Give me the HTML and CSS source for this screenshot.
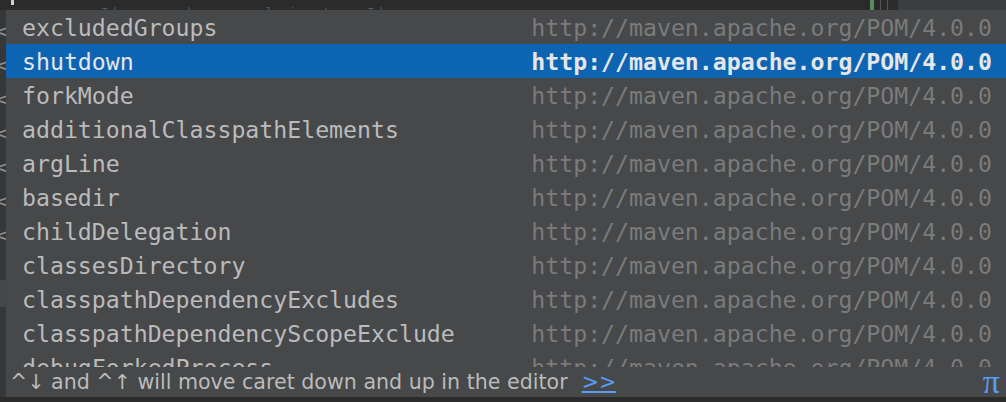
FILE: index.html
```html
<!DOCTYPE html>
<html>
<head>
<meta charset="utf-8">
<link rel="stylesheet" href="styles.css">
</head>
<body>
<div class="screen">
  <div class="topbar">
    <span class="caret-mark"></span>
    <span class="ghost">&lt;groupId&gt;org.apache.maven.plugins&lt;/groupId&gt;</span>
    <span class="spacer"></span>
    <span class="gutter-green"></span>
    <span class="gutter-line"></span>
    <span class="gutter-line"></span>
    <span class="right-panel"></span>
  </div>
  <div class="main">
    <div class="gutter">
      <span>&lt;</span><span>&lt;</span><span>&lt;</span><span>&lt;</span><span>&lt;</span><span>&lt;</span><span>&lt;</span>
      <div class="gutter-band"></div>
    </div>
    <div class="popup">
      <ul class="list">
        <li class="row"><span class="name">excludedGroups</span><span class="ns">http://maven.apache.org/POM/4.0.0</span></li>
        <li class="row selected"><span class="name">shutdown</span><span class="ns">http://maven.apache.org/POM/4.0.0</span></li>
        <li class="row"><span class="name">forkMode</span><span class="ns">http://maven.apache.org/POM/4.0.0</span></li>
        <li class="row"><span class="name">additionalClasspathElements</span><span class="ns">http://maven.apache.org/POM/4.0.0</span></li>
        <li class="row"><span class="name">argLine</span><span class="ns">http://maven.apache.org/POM/4.0.0</span></li>
        <li class="row"><span class="name">basedir</span><span class="ns">http://maven.apache.org/POM/4.0.0</span></li>
        <li class="row"><span class="name">childDelegation</span><span class="ns">http://maven.apache.org/POM/4.0.0</span></li>
        <li class="row"><span class="name">classesDirectory</span><span class="ns">http://maven.apache.org/POM/4.0.0</span></li>
        <li class="row"><span class="name">classpathDependencyExcludes</span><span class="ns">http://maven.apache.org/POM/4.0.0</span></li>
        <li class="row"><span class="name">classpathDependencyScopeExclude</span><span class="ns">http://maven.apache.org/POM/4.0.0</span></li>
        <li class="row"><span class="name">debugForkedProcess</span><span class="ns">http://maven.apache.org/POM/4.0.0</span></li>
      </ul>
      <div class="footer">
        <span class="hint">^↓ and ^↑ will move caret down and up in the editor</span>
        <a class="more" href="#">&gt;&gt;</a>
        <span class="pi">π</span>
      </div>
    </div>
  </div>
</div>
</body>
</html>
```
FILE: styles.css
```css
* { box-sizing: border-box; }
html, body {
  margin: 0;
  padding: 0;
  background: #2b2b2b;
  width: 1006px;
  height: 402px;
  overflow: hidden;
}
.screen {
  width: 1006px;
  height: 402px;
  display: flex;
  flex-direction: column;
}
.topbar {
  height: 10px;
  flex: none;
  display: flex;
  align-items: stretch;
  background: #2b2b2b;
  overflow: hidden;
}
.caret-mark {
  width: 3px;
  height: 5px;
  background: #d0d0d0;
  margin-left: 11px;
}
.ghost {
  margin-left: 40px;
  margin-top: 6px;
  font-family: "DejaVu Sans Mono", monospace;
  font-size: 13px;
  line-height: 13px;
  color: #55585a;
  white-space: nowrap;
}
.spacer { flex: 1; }
.gutter-green {
  width: 4px;
  background: #5a8a5e;
  margin-right: 6px;
}
.gutter-line {
  width: 1px;
  background: #555758;
  margin-right: 6px;
}
.right-panel {
  width: 108px;
  background: #3c3f41;
  margin-left: 4px;
}
.main {
  height: 387px;
  flex: none;
  display: flex;
}
.gutter {
  width: 6px;
  flex: none;
  background: #353739;
  display: flex;
  flex-direction: column;
  overflow: hidden;
  font-family: "DejaVu Sans", sans-serif;
  font-size: 20px;
  color: #8c8c8c;
  padding-top: 4px;
}
.gutter span {
  height: 34px;
  line-height: 34px;
  margin-left: -6px;
  flex: none;
}
.gutter-band {
  margin-top: 28px;
  height: 27px;
  background: #45484a;
  flex: none;
}
.popup {
  flex: 1;
  background: #46484a;
  display: flex;
  flex-direction: column;
  overflow: hidden;
}
.list {
  list-style: none;
  margin: 0;
  padding: 0;
  height: 357px;
  overflow: hidden;
  flex: none;
}
.row {
  height: 34px;
  display: flex;
  align-items: center;
  justify-content: space-between;
  padding: 0 14px 0 16px;
  font-family: "DejaVu Sans Mono", monospace;
  font-size: 23.2px;
  white-space: nowrap;
}
.name { color: #bbbbbb; }
.ns { color: #7b7b7b; }
.row.selected { background: #0d64b2; }
.row.selected .name { color: #e6e6e6; }
.row.selected .ns { color: #e6e6e6; font-weight: bold; }
.footer {
  height: 30px;
  flex: none;
  display: flex;
  align-items: center;
  padding: 0 6px 0 4px;
  font-family: "DejaVu Sans", sans-serif;
  font-size: 20.6px;
  color: #bbbbbb;
  white-space: nowrap;
}
.more {
  margin-left: 14px;
  color: #589df6;
  text-decoration: underline;
}
.pi {
  margin-left: auto;
  color: #589df6;
  font-family: "Liberation Serif", serif;
  font-size: 34px;
  line-height: 28px;
}
```
